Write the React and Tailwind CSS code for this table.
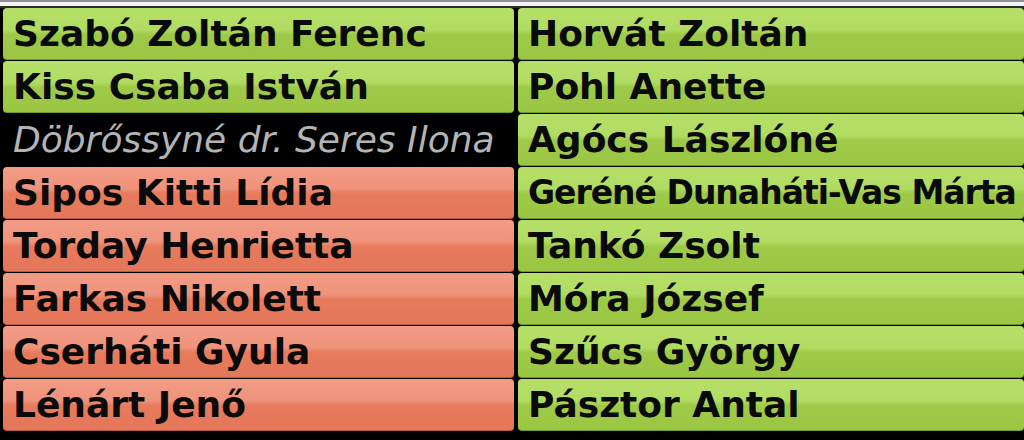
import React from 'react';

const left = [
  { name: 'Szabó Zoltán Ferenc', kind: 'green' },
  { name: 'Kiss Csaba István', kind: 'green' },
  { name: 'Döbrőssyné dr. Seres Ilona', kind: 'black' },
  { name: 'Sipos Kitti Lídia', kind: 'red' },
  { name: 'Torday Henrietta', kind: 'red' },
  { name: 'Farkas Nikolett', kind: 'red' },
  { name: 'Cserháti Gyula', kind: 'red' },
  { name: 'Lénárt Jenő', kind: 'red' },
];

const right = [
  { name: 'Horvát Zoltán' },
  { name: 'Pohl Anette' },
  { name: 'Agócs Lászlóné' },
  { name: 'Geréné Dunaháti-Vas Márta', tight: true },
  { name: 'Tankó Zsolt' },
  { name: 'Móra József' },
  { name: 'Szűcs György' },
  { name: 'Pásztor Antal' },
];

const Bar = ({ name, kind, tight }) => {
  if (kind === 'black') {
    return (
      <div className="h-[52px] flex items-center pl-[10px] bg-black overflow-hidden">
        <span className="text-[36px] italic font-extralight text-[#b4b4b4] whitespace-nowrap leading-none">{name}</span>
      </div>
    );
  }
  const bg = kind === 'red'
    ? 'bg-[linear-gradient(to_bottom,#f29c86_0%,#ef937c_42%,#e77b5c_52%,#e4765a_100%)] border-b border-[#b85a40]'
    : 'bg-[linear-gradient(to_bottom,#b6df69_0%,#b1dc62_42%,#9fca48_52%,#9bc644_100%)] border-b border-[#6f9a2c]';
  return (
    <div className={`h-[52px] flex items-center pl-[10px] rounded-[4px] overflow-hidden ${bg}`}>
      <span className={tight
        ? 'text-[33px] tracking-[-1px] font-bold text-[#0a0a0a] whitespace-nowrap leading-none'
        : 'text-[36px] font-bold text-[#0a0a0a] whitespace-nowrap leading-none'}>{name}</span>
    </div>
  );
};

export default function App() {
  return (
    <div className="w-[1024px] h-[440px] bg-black overflow-hidden" style={{ fontFamily: '"DejaVu Sans", Lato, sans-serif' }}>
      <div className="h-[2px] bg-[#8e9096]" />
      <div className="h-[4px] bg-[#f2f2f2]" />
      <div className="h-[2px] bg-[#2a2a2a]" />
      <div className="grid grid-cols-[511px_1fr] gap-x-[4px] pl-[3px]">
        <div className="flex flex-col gap-[1px]">
          {left.map((r) => (
            <Bar key={r.name} name={r.name} kind={r.kind} />
          ))}
        </div>
        <div className="flex flex-col gap-[1px]">
          {right.map((r) => (
            <Bar key={r.name} name={r.name} kind="green" tight={r.tight} />
          ))}
        </div>
      </div>
    </div>
  );
}
